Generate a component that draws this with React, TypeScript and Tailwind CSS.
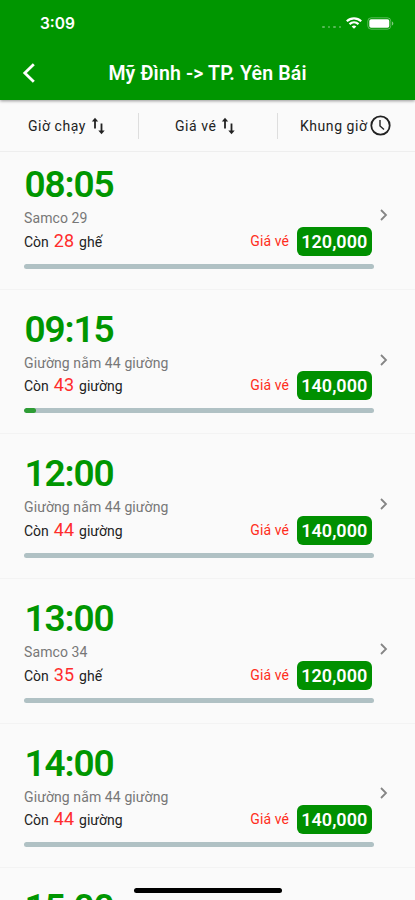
const sorts = [
  { label: 'Giờ chạy', icon: 'sort' },
  { label: 'Giá vé', icon: 'sort' },
  { label: 'Khung giờ', icon: 'clock' },
]

const trips = [
  { time: '08:05', vehicle: 'Samco 29', seats: 28, unit: 'ghế', price: '120,000', filled: 0 },
  { time: '09:15', vehicle: 'Giường nằm 44 giường', seats: 43, unit: 'giường', price: '140,000', filled: 3.5 },
  { time: '12:00', vehicle: 'Giường nằm 44 giường', seats: 44, unit: 'giường', price: '140,000', filled: 0 },
  { time: '13:00', vehicle: 'Samco 34', seats: 35, unit: 'ghế', price: '120,000', filled: 0 },
  { time: '14:00', vehicle: 'Giường nằm 44 giường', seats: 44, unit: 'giường', price: '140,000', filled: 0 },
  { time: '15:00', vehicle: 'Giường nằm 44 giường', seats: 44, unit: 'giường', price: '140,000', filled: 0 },
]

function StatusBar() {
  return (
    <div className="flex h-[46px] items-center justify-between pl-10 pr-[21px]">
      <span className="mt-0.5 font-['Inter'] text-[15.5px] leading-5 font-semibold">3:09</span>
      <div className="flex items-center">
        <div className="mt-2 mr-[5px] flex gap-[3px] opacity-35">
          <i className="size-[2.5px] rounded-full bg-white" />
          <i className="size-[2.5px] rounded-full bg-white" />
          <i className="size-[2.5px] rounded-full bg-white" />
          <i className="size-[2.5px] rounded-full bg-white" />
        </div>
        <svg width="16" height="12" viewBox="0 0 16 12" fill="none" stroke="#fff" strokeWidth="2.2">
          <path d="M0.8 4.2C4.9 0.3 11.1 0.3 15.2 4.2" />
          <path d="M3.5 7.1C6.1 4.7 9.9 4.7 12.5 7.1" />
          <path d="M8 11.8L5.7 9.4C7 8.2 9 8.2 10.3 9.4Z" fill="#fff" stroke="none" />
        </svg>
        <svg className="ml-[5px]" width="27" height="13" viewBox="0 0 27 13">
          <rect x="0.8" y="0.8" width="23" height="11.4" rx="3.4" fill="none" stroke="#fff" strokeOpacity="0.35" />
          <rect x="2.3" y="2.3" width="20" height="8.4" rx="1.8" fill="#fff" />
          <path d="M25 4.5c1.8.7 1.8 3.3 0 4Z" fill="#fff" fillOpacity="0.5" />
        </svg>
      </div>
    </div>
  )
}

function SortIcon() {
  return (
    <svg className="ml-[5px]" width="15" height="18" viewBox="0 0 15 18" fill="none" stroke="#222" strokeWidth="1.8">
      <path d="M4 11.5V3" />
      <path d="M0.8 4.6L4 0.8L7.2 4.6Z" fill="#222" stroke="none" />
      <path d="M10.5 6.5V15" />
      <path d="M7.3 13.4L10.5 17.2L13.7 13.4Z" fill="#222" stroke="none" />
    </svg>
  )
}

function ClockIcon() {
  return (
    <svg className="ml-0.5" width="21" height="21" viewBox="0 0 21 21" fill="none" stroke="#222">
      <circle cx="10.5" cy="10.5" r="9.2" strokeWidth="1.8" />
      <path d="M10 5V11L14 14.5" strokeWidth="1.4" />
    </svg>
  )
}

export default function App() {
  return (
    <div className="relative flex h-[900px] w-[415px] flex-col overflow-hidden bg-[#fafafa] font-['Roboto','Liberation_Sans',sans-serif] text-[#222]">
      <header className="relative z-10 h-[100px] shrink-0 bg-[#009600] text-white shadow-[0_1px_3px_rgba(0,0,0,0.4)]">
        <StatusBar />
        <div className="grid h-[54px] grid-cols-[60px_1fr_60px] items-center">
          <svg className="ml-[22px]" width="14" height="20" viewBox="0 0 14 20" fill="none" stroke="#fff" strokeWidth="2.8">
            <path d="M11.8 1.2L2.8 10L11.8 18.8" />
          </svg>
          <h1 className="mt-0.5 text-center text-[19.5px] leading-6 font-semibold tracking-[0.15px] whitespace-nowrap">Mỹ Đình -&gt; TP. Yên Bái</h1>
        </div>
      </header>

      <div className="flex h-[52px] shrink-0 items-center border-b border-[#eeeeee] text-[14px] leading-5 tracking-[0.55px]">
        {sorts.map((sort, i) => (
          <div
            key={sort.label}
            className={`flex h-[26px] items-center whitespace-nowrap ${
              i === 0 ? 'w-[139px] border-r border-[#dedede] pl-7' : i === 1 ? 'w-[139px] border-r border-[#dedede] pl-9' : 'pl-[22px]'
            }`}
          >
            <span>{sort.label}</span>
            {sort.icon === 'sort' ? <SortIcon /> : <ClockIcon />}
          </div>
        ))}
      </div>

      <div>
        {trips.map((trip, i) => (
          <div
            key={trip.time}
            className={`flex items-center border-b border-[#f3f3f3] pb-5 pl-6 ${i === 0 ? 'h-[137.8px] pt-[10.3px]' : 'h-[144.6px] pt-[17.1px]'}`}
          >
            <div className="w-[350px]">
              <div className="h-[46px] pl-[0.5px] text-[37px] leading-[46px] font-semibold tracking-[-1.15px] text-[#009600]">{trip.time}</div>
              <div className="h-[18.5px] text-[14px] leading-5 tracking-[0.1px] text-[#777]">{trip.vehicle}</div>
              <div className="flex h-[29px] items-center">
                <div className="flex items-baseline gap-[5px] text-[14px] leading-5">
                  <span>Còn</span>
                  <span className="text-[18px] text-[#ff2d2d]">{trip.seats}</span>
                  <span>{trip.unit}</span>
                </div>
                <span className="ml-auto text-[14px] tracking-[0.1px] text-[#ff2d20]">Giá vé</span>
                <span className="mr-[2.5px] ml-2 flex h-[29px] w-[74.5px] items-center justify-center rounded-[6px] bg-[#009000] text-[18px] font-semibold text-white">
                  {trip.price}
                </span>
              </div>
              <div className="mt-2 h-[5px] overflow-hidden rounded-full bg-[#b0c1c4]">
                <div className="h-full rounded-full bg-[#2e9d35]" style={{ width: `${trip.filled}%` }} />
              </div>
            </div>
            <svg className="mb-px ml-1.5" width="8" height="12" viewBox="0 0 8 12" fill="none" stroke="#858585" strokeWidth="1.8">
              <path d="M1 1L6 6L1 11" />
            </svg>
          </div>
        ))}
      </div>

      <div className="absolute bottom-[7.5px] left-[134px] h-[5px] w-[148px] rounded-full bg-black" />
    </div>
  )
}
